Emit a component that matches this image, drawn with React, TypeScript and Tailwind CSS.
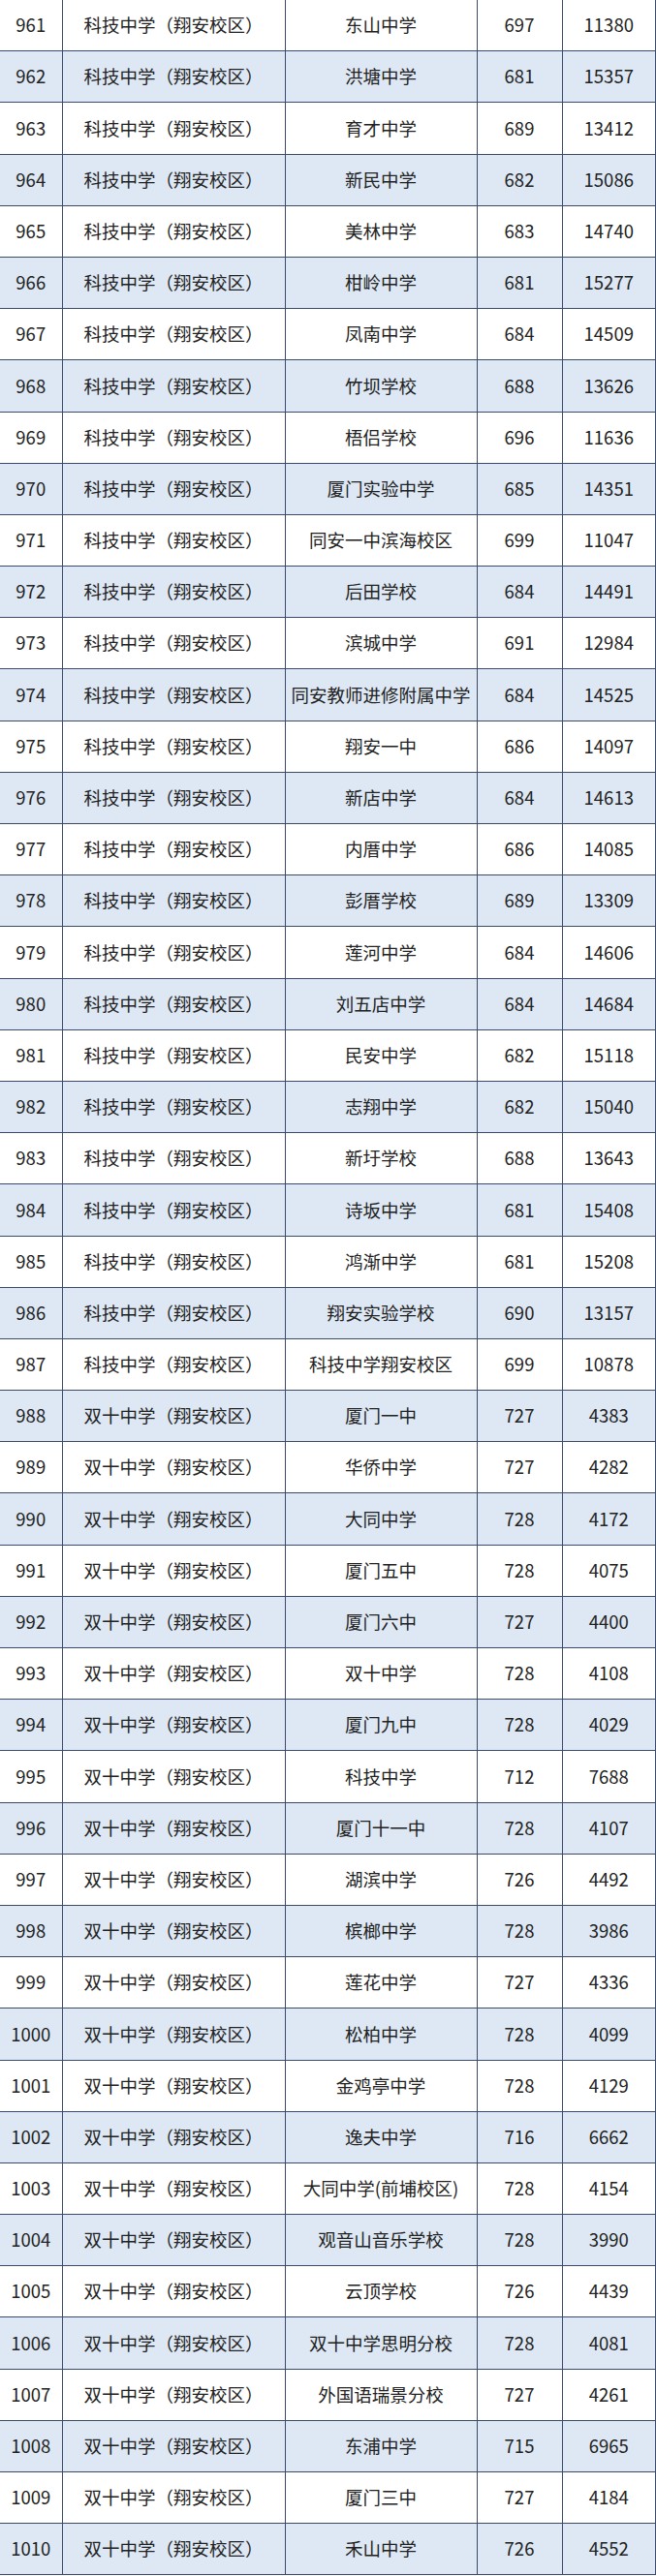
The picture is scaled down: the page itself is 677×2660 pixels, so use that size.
const rows: [number, string, string, number, number][] = [
  [961, '科技中学（翔安校区）', '东山中学', 697, 11380],
  [962, '科技中学（翔安校区）', '洪塘中学', 681, 15357],
  [963, '科技中学（翔安校区）', '育才中学', 689, 13412],
  [964, '科技中学（翔安校区）', '新民中学', 682, 15086],
  [965, '科技中学（翔安校区）', '美林中学', 683, 14740],
  [966, '科技中学（翔安校区）', '柑岭中学', 681, 15277],
  [967, '科技中学（翔安校区）', '凤南中学', 684, 14509],
  [968, '科技中学（翔安校区）', '竹坝学校', 688, 13626],
  [969, '科技中学（翔安校区）', '梧侣学校', 696, 11636],
  [970, '科技中学（翔安校区）', '厦门实验中学', 685, 14351],
  [971, '科技中学（翔安校区）', '同安一中滨海校区', 699, 11047],
  [972, '科技中学（翔安校区）', '后田学校', 684, 14491],
  [973, '科技中学（翔安校区）', '滨城中学', 691, 12984],
  [974, '科技中学（翔安校区）', '同安教师进修附属中学', 684, 14525],
  [975, '科技中学（翔安校区）', '翔安一中', 686, 14097],
  [976, '科技中学（翔安校区）', '新店中学', 684, 14613],
  [977, '科技中学（翔安校区）', '内厝中学', 686, 14085],
  [978, '科技中学（翔安校区）', '彭厝学校', 689, 13309],
  [979, '科技中学（翔安校区）', '莲河中学', 684, 14606],
  [980, '科技中学（翔安校区）', '刘五店中学', 684, 14684],
  [981, '科技中学（翔安校区）', '民安中学', 682, 15118],
  [982, '科技中学（翔安校区）', '志翔中学', 682, 15040],
  [983, '科技中学（翔安校区）', '新圩学校', 688, 13643],
  [984, '科技中学（翔安校区）', '诗坂中学', 681, 15408],
  [985, '科技中学（翔安校区）', '鸿渐中学', 681, 15208],
  [986, '科技中学（翔安校区）', '翔安实验学校', 690, 13157],
  [987, '科技中学（翔安校区）', '科技中学翔安校区', 699, 10878],
  [988, '双十中学（翔安校区）', '厦门一中', 727, 4383],
  [989, '双十中学（翔安校区）', '华侨中学', 727, 4282],
  [990, '双十中学（翔安校区）', '大同中学', 728, 4172],
  [991, '双十中学（翔安校区）', '厦门五中', 728, 4075],
  [992, '双十中学（翔安校区）', '厦门六中', 727, 4400],
  [993, '双十中学（翔安校区）', '双十中学', 728, 4108],
  [994, '双十中学（翔安校区）', '厦门九中', 728, 4029],
  [995, '双十中学（翔安校区）', '科技中学', 712, 7688],
  [996, '双十中学（翔安校区）', '厦门十一中', 728, 4107],
  [997, '双十中学（翔安校区）', '湖滨中学', 726, 4492],
  [998, '双十中学（翔安校区）', '槟榔中学', 728, 3986],
  [999, '双十中学（翔安校区）', '莲花中学', 727, 4336],
  [1000, '双十中学（翔安校区）', '松柏中学', 728, 4099],
  [1001, '双十中学（翔安校区）', '金鸡亭中学', 728, 4129],
  [1002, '双十中学（翔安校区）', '逸夫中学', 716, 6662],
  [1003, '双十中学（翔安校区）', '大同中学(前埔校区)', 728, 4154],
  [1004, '双十中学（翔安校区）', '观音山音乐学校', 728, 3990],
  [1005, '双十中学（翔安校区）', '云顶学校', 726, 4439],
  [1006, '双十中学（翔安校区）', '双十中学思明分校', 728, 4081],
  [1007, '双十中学（翔安校区）', '外国语瑞景分校', 727, 4261],
  [1008, '双十中学（翔安校区）', '东浦中学', 715, 6965],
  [1009, '双十中学（翔安校区）', '厦门三中', 727, 4184],
  [1010, '双十中学（翔安校区）', '禾山中学', 726, 4552],
];

const cell = 'flex items-center justify-center border-r-[1.5px] border-[#3b4a6b] whitespace-nowrap';

export default function App() {
  return (
    <div
      className="w-[677px] bg-white text-[18.5px] text-[#222]"
      style={{ fontFamily: '"Noto Sans CJK SC", "Noto Sans", sans-serif' }}
    >
      {rows.map(([no, from, to, score, rank]) => (
        <div
          key={no}
          className={`grid h-[53.2px] grid-cols-[64.5px_230px_198px_88px_96.5px] border-b-[1.5px] border-[#3b4a6b] ${no % 2 === 0 ? 'bg-[#dde8f4]' : 'bg-white'}`}
        >
          <div className={cell}>{no}</div>
          <div className={cell}>{from}</div>
          <div className={cell}>{to}</div>
          <div className={cell}>{score}</div>
          <div className={cell}>{rank}</div>
        </div>
      ))}
    </div>
  );
}
